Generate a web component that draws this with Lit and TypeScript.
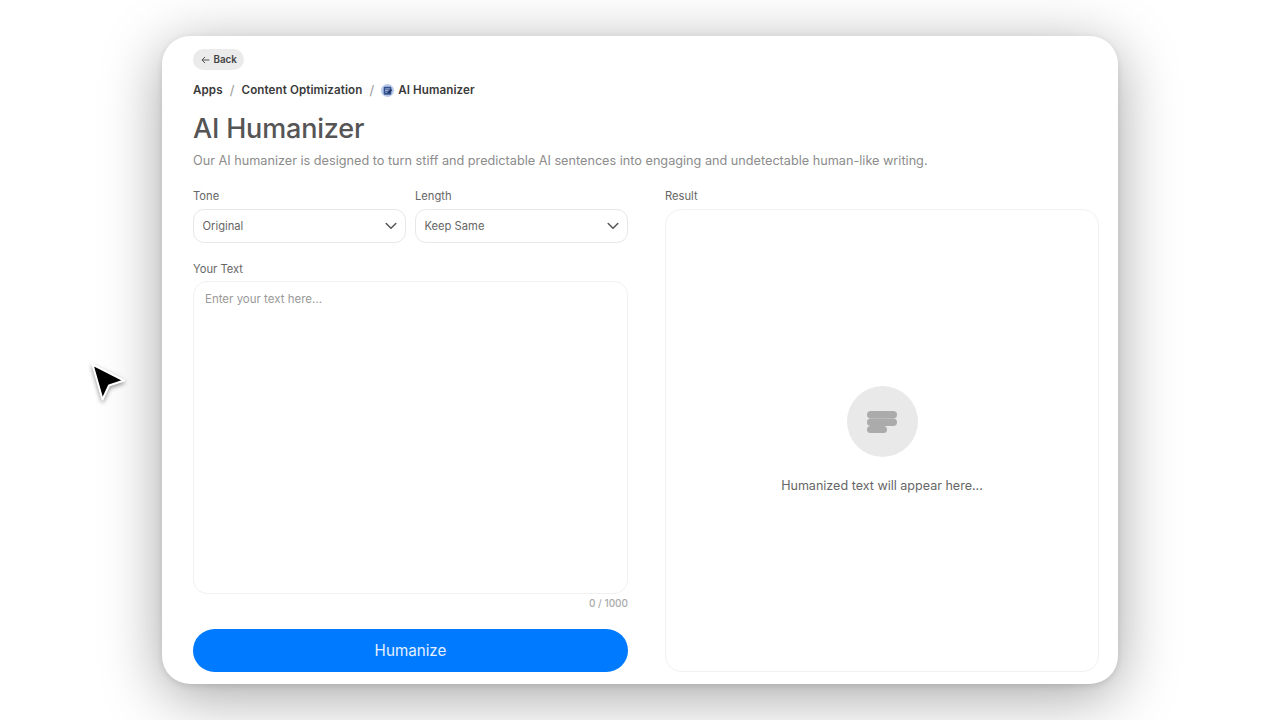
import { LitElement, css, html } from 'lit';

class AppRoot extends LitElement {
    static styles = css`
        :host {
            display: block;
            width: 1280px;
            height: 720px;
            overflow: hidden;
            background: #fff;
            position: relative;
            font-family: 'Inter', 'Liberation Sans', sans-serif;
            color: #555;
        }

        .stage {
            box-sizing: border-box;
            height: 720px;
            padding: 36px 162px;
        }

        .card {
            box-sizing: border-box;
            height: 648px;
            padding: 13px 19px 12px 31px;
            background: #fff;
            border-radius: 28px;
            box-shadow: 0 12px 60px rgba(0, 0, 0, 0.36), 0 2px 6px rgba(0, 0, 0, 0.1);
            display: flex;
            flex-direction: column;
        }

        .back {
            align-self: flex-start;
            display: flex;
            align-items: center;
            gap: 4px;
            height: 21px;
            padding: 0 7.5px;
            border-radius: 11px;
            background: #ebebeb;
            color: #444;
            font-size: 9.8px;
            font-weight: 600;
        }

        .crumbs {
            display: flex;
            align-items: center;
            margin-top: 13px;
            height: 14px;
            font-size: 11.6px;
            font-weight: 600;
            letter-spacing: 0.1px;
            color: #3a3a3a;
        }

        .crumbs .sep {
            margin: 0 7px;
            color: #999;
            font-weight: 400;
            font-size: 13px;
        }

        .crumbs svg {
            margin-right: 4px;
        }

        h1 {
            margin: 15px 0 0;
            font-size: 27px;
            line-height: 34px;
            font-weight: 500;
            color: #555;
            letter-spacing: -0.17px;
        }

        .lead {
            margin: 6px 0 0;
            font-size: 12.68px;
            line-height: 18px;
            color: #8c8c8c;
        }

        .cols {
            flex: 1;
            display: grid;
            grid-template-columns: 435px 434px;
            column-gap: 37px;
            margin-top: 19px;
            min-height: 0;
        }

        .col {
            display: flex;
            flex-direction: column;
            min-height: 0;
        }

        .row {
            display: grid;
            grid-template-columns: 213px 213px;
            column-gap: 9px;
        }

        label {
            display: block;
            height: 14px;
            line-height: 14px;
            font-size: 11.2px;
            color: #666;
            margin-bottom: 6px;
        }

        .select {
            box-sizing: border-box;
            height: 34px;
            display: flex;
            align-items: center;
            justify-content: space-between;
            padding: 0 8px 0 8.5px;
            border: 1px solid #e8e8e8;
            border-radius: 11px;
            font-size: 11.2px;
            color: #666;
        }

        .text-label {
            margin-top: 19px;
            margin-bottom: 5px;
        }

        .textarea {
            box-sizing: border-box;
            flex: 1;
            min-height: 0;
            padding: 10px 11px;
            border: 1px solid #f1f1f1;
            border-radius: 14px;
            font-size: 11.5px;
            line-height: 14px;
            color: #9a9a9a;
        }

        .count {
            margin-top: 3px;
            text-align: right;
            font-size: 10px;
            line-height: 12px;
            font-weight: 500;
            color: #aaa;
        }

        .submit {
            margin-top: 20px;
            height: 43px;
            display: flex;
            align-items: center;
            justify-content: center;
            border-radius: 22px;
            background: #007aff;
            color: #e4f0ff;
            font-size: 15.2px;
            font-weight: 400;
        }

        .result {
            box-sizing: border-box;
            flex: 1;
            min-height: 0;
            border: 1px solid #f1f1f1;
            border-radius: 16px;
            display: flex;
            flex-direction: column;
            align-items: center;
            padding-top: 176px;
        }

        .badge {
            width: 71px;
            height: 71px;
            border-radius: 50%;
            background: #e9e9e9;
            display: flex;
            align-items: center;
            justify-content: center;
        }

        .result p {
            margin: 21px 0 0;
            font-size: 12.55px;
            line-height: 16px;
            color: #666;
        }

        .pointer {
            position: absolute;
            left: 88px;
            top: 360px;
            filter: drop-shadow(0 2px 2px rgba(0, 0, 0, 0.4));
        }
    `;

    chevron() {
        return html`<svg width="12" height="8" viewBox="0 0 12 8" fill="none">
            <path d="M1.2 1.5 6 6.2l4.8-4.7" stroke="#555" stroke-width="1.5" stroke-linecap="round" stroke-linejoin="round" />
        </svg>`;
    }

    render() {
        return html`
            <div class="stage">
                <div class="card">
                    <div class="back">
                        <svg width="9" height="8" viewBox="0 0 9 8" fill="none">
                            <path d="M8 4H1.2M3.8 1.2 1 4l2.8 2.8" stroke="#555" stroke-width="1" stroke-linecap="round" stroke-linejoin="round" />
                        </svg>
                        Back
                    </div>
                    <div class="crumbs">
                        <span>Apps</span>
                        <span class="sep">/</span>
                        <span>Content Optimization</span>
                        <span class="sep">/</span>
                        <svg width="13" height="13" viewBox="0 0 12 12">
                            <circle cx="6" cy="6" r="6" fill="#b9c9ea" />
                            <rect x="2.5" y="2.5" width="7" height="7.5" rx="1" fill="#34518f" />
                            <path d="M3.8 4.5h4.4M3.8 6h3M3.8 7.5h2" stroke="#c7d4ee" stroke-width="0.7" />
                            <path d="m7 8.2 3-3" stroke="#1d2c50" stroke-width="1.2" />
                        </svg>
                        <span>AI Humanizer</span>
                    </div>
                    <h1>AI Humanizer</h1>
                    <p class="lead">Our AI humanizer is designed to turn stiff and predictable AI sentences into engaging and undetectable human-like writing.</p>
                    <div class="cols">
                        <div class="col">
                            <div class="row">
                                <div>
                                    <label>Tone</label>
                                    <div class="select"><span>Original</span>${this.chevron()}</div>
                                </div>
                                <div>
                                    <label>Length</label>
                                    <div class="select"><span>Keep Same</span>${this.chevron()}</div>
                                </div>
                            </div>
                            <label class="text-label">Your Text</label>
                            <div class="textarea">Enter your text here...</div>
                            <div class="count">0 / 1000</div>
                            <div class="submit">Humanize</div>
                        </div>
                        <div class="col">
                            <label>Result</label>
                            <div class="result">
                                <div class="badge">
                                    <svg width="30" height="22" viewBox="0 0 30 22" fill="#ababab">
                                        <rect x="0" y="0" width="30" height="7.5" rx="3.75" />
                                        <rect x="0" y="7.5" width="30" height="7.5" rx="3.75" />
                                        <rect x="0" y="15" width="20" height="7" rx="3.5" />
                                    </svg>
                                </div>
                                <p>Humanized text will appear here...</p>
                            </div>
                        </div>
                    </div>
                </div>
            </div>
            <svg class="pointer" width="42" height="46" viewBox="0 0 42 46">
                <path d="M4.5 4.5 36 20.5 21 25.5 14.5 39.5Z" fill="#000" stroke="#fff" stroke-width="2" stroke-linejoin="round" />
            </svg>
        `;
    }
}

customElements.define('app-root', AppRoot);
